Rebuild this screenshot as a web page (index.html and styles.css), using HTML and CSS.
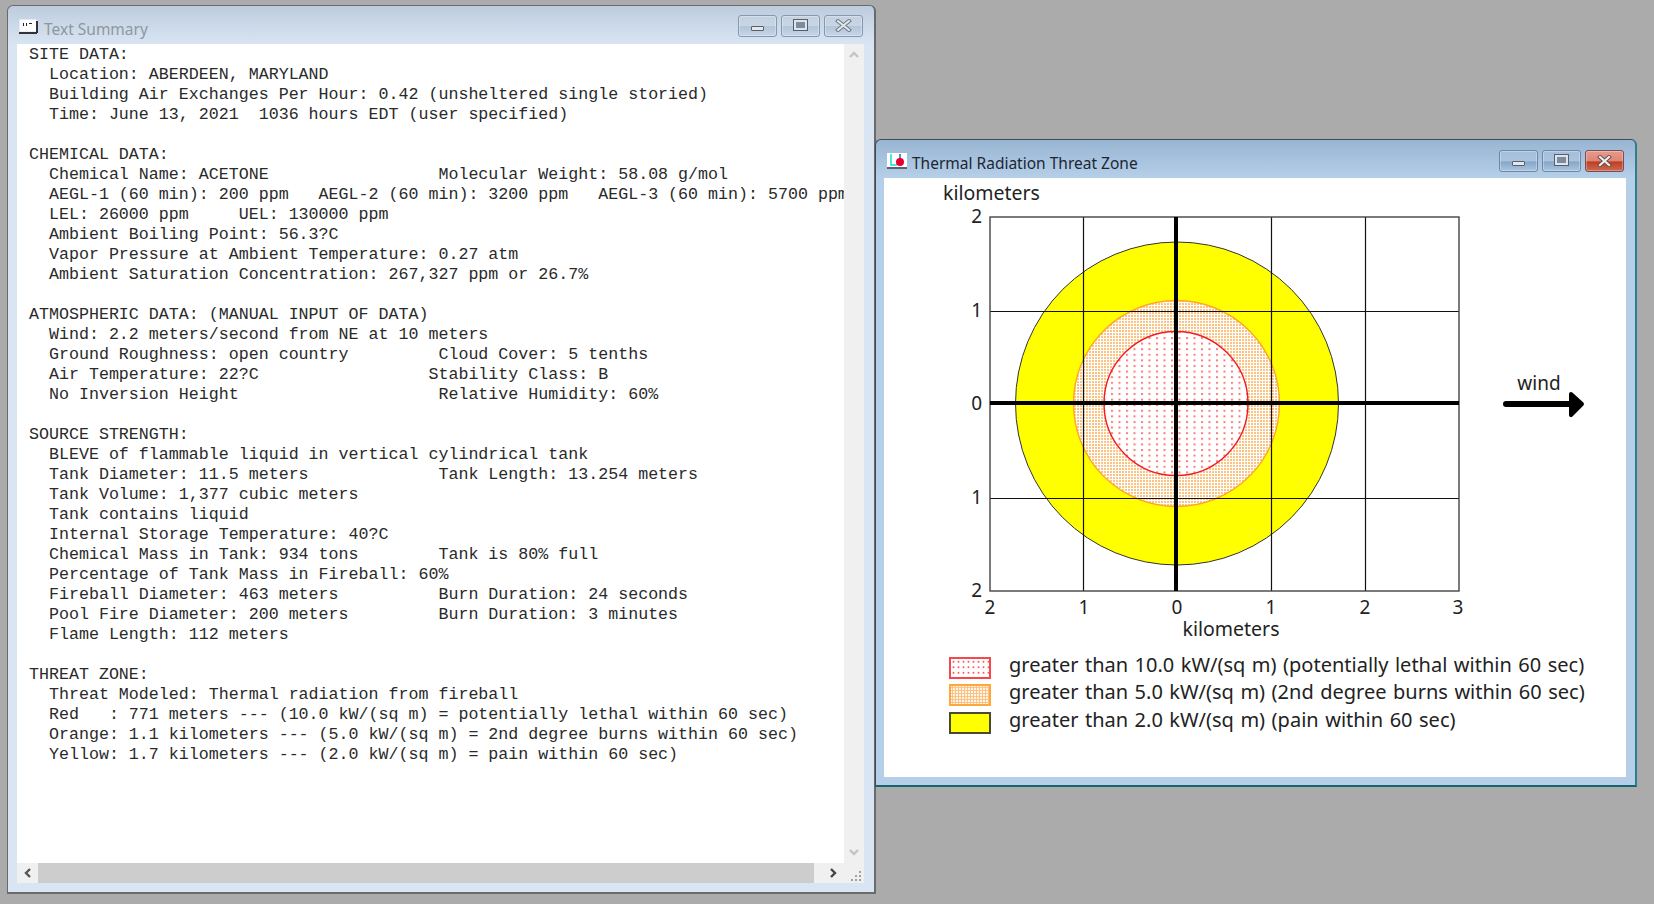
FILE: index.html
```html
<!DOCTYPE html>
<html lang="en">
<head>
    <meta charset="UTF-8">
    <title>Text Summary and Thermal Radiation Threat Zone</title>
    <link rel="stylesheet" href="styles.css">
</head>
<body>
    <div class="window summary-window">
        <div class="titlebar">
            <svg class="title-icon" width="20" height="16" viewBox="0 0 20 16">
                <rect x="0.5" y="0.5" width="17" height="12" fill="#fff"/>
                <path d="M0 14h18M18 2v12" stroke="#333" stroke-width="2" fill="none"/>
                <path d="M4 4h1v3H4zM7 4h1v3H7zM10 4h3v1h-3z" fill="#222"/>
            </svg>
            <span class="title-text">Text Summary</span>
            <div class="controls">
                <div class="ctl"><span class="ico-min"></span></div>
                <div class="ctl"><span class="ico-max"></span></div>
                <div class="ctl">
                    <svg width="17" height="13" viewBox="0 0 17 13">
                        <path d="M3 2l11 9M14 2L3 11" stroke="#6d7782" stroke-width="4" stroke-linecap="square"/>
                        <path d="M3 2l11 9M14 2L3 11" stroke="#dfe5ea" stroke-width="2" stroke-linecap="square"/>
                    </svg>
                </div>
            </div>
        </div>
        <div class="summary-body">
            <div class="text-row">
                <pre class="report">SITE DATA:
  Location: ABERDEEN, MARYLAND
  Building Air Exchanges Per Hour: 0.42 (unsheltered single storied)
  Time: June 13, 2021  1036 hours EDT (user specified)

CHEMICAL DATA:
  Chemical Name: ACETONE                 Molecular Weight: 58.08 g/mol
  AEGL-1 (60 min): 200 ppm   AEGL-2 (60 min): 3200 ppm   AEGL-3 (60 min): 5700 ppm
  LEL: 26000 ppm     UEL: 130000 ppm
  Ambient Boiling Point: 56.3?C
  Vapor Pressure at Ambient Temperature: 0.27 atm
  Ambient Saturation Concentration: 267,327 ppm or 26.7%

ATMOSPHERIC DATA: (MANUAL INPUT OF DATA)
  Wind: 2.2 meters/second from NE at 10 meters
  Ground Roughness: open country         Cloud Cover: 5 tenths
  Air Temperature: 22?C                 Stability Class: B
  No Inversion Height                    Relative Humidity: 60%

SOURCE STRENGTH:
  BLEVE of flammable liquid in vertical cylindrical tank
  Tank Diameter: 11.5 meters             Tank Length: 13.254 meters
  Tank Volume: 1,377 cubic meters
  Tank contains liquid
  Internal Storage Temperature: 40?C
  Chemical Mass in Tank: 934 tons        Tank is 80% full
  Percentage of Tank Mass in Fireball: 60%
  Fireball Diameter: 463 meters          Burn Duration: 24 seconds
  Pool Fire Diameter: 200 meters         Burn Duration: 3 minutes
  Flame Length: 112 meters

THREAT ZONE:
  Threat Modeled: Thermal radiation from fireball
  Red   : 771 meters --- (10.0 kW/(sq m) = potentially lethal within 60 sec)
  Orange: 1.1 kilometers --- (5.0 kW/(sq m) = 2nd degree burns within 60 sec)
  Yellow: 1.7 kilometers --- (2.0 kW/(sq m) = pain within 60 sec)</pre>
                <div class="vscroll">
                    <svg width="12" height="8" viewBox="0 0 12 8"><path d="M2 6l4-4 4 4" stroke="#c4c4c4" stroke-width="2.4" fill="none"/></svg>
                    <svg width="12" height="8" viewBox="0 0 12 8"><path d="M2 2l4 4 4-4" stroke="#c4c4c4" stroke-width="2.4" fill="none"/></svg>
                </div>
            </div>
            <div class="hscroll">
                <div class="arrow-btn">
                    <svg width="8" height="12" viewBox="0 0 8 12"><path d="M6 2L2 6l4 4" stroke="#555" stroke-width="2.4" fill="none"/></svg>
                </div>
                <div class="thumb"></div>
                <div class="arrow-btn right-btn">
                    <svg width="8" height="12" viewBox="0 0 8 12"><path d="M2 2l4 4-4 4" stroke="#444" stroke-width="2.4" fill="none"/></svg>
                </div>
                <div class="grip">
                    <svg width="11" height="11" viewBox="0 0 11 11" fill="#a0a0a0">
                        <rect x="8" y="0" width="2" height="2"/><rect x="8" y="4" width="2" height="2"/><rect x="8" y="8" width="2" height="2"/>
                        <rect x="4" y="4" width="2" height="2"/><rect x="4" y="8" width="2" height="2"/><rect x="0" y="8" width="2" height="2"/>
                    </svg>
                </div>
            </div>
        </div>
    </div>

    <div class="window threat-window">
        <div class="titlebar">
            <svg class="title-icon" width="20" height="16" viewBox="0 0 20 16">
                <rect width="20" height="14" fill="#fff"/>
                <path d="M4 1v11h6" stroke="#19d8f0" stroke-width="1.5" fill="none"/>
                <path d="M13 1v5" stroke="#2266dd" stroke-width="1.5"/>
                <circle cx="13" cy="9" r="4" fill="#e8002c"/>
                <path d="M0 15h20" stroke="#222" stroke-width="1.2"/>
            </svg>
            <span class="title-text">Thermal Radiation Threat Zone</span>
            <div class="controls">
                <div class="ctl"><span class="ico-min"></span></div>
                <div class="ctl"><span class="ico-max"></span></div>
                <div class="ctl ctl-close">
                    <svg width="15" height="12" viewBox="0 0 15 12">
                        <path d="M3 2l9 8M12 2L3 10" stroke="#6a4a4c" stroke-width="4" stroke-linecap="square"/>
                        <path d="M3 2l9 8M12 2L3 10" stroke="#eceff1" stroke-width="2.200" stroke-linecap="square"/>
                    </svg>
                </div>
            </div>
        </div>
        <div class="threat-body">
            <svg class="chart" width="743" height="464" viewBox="884 178 743 464">
                <defs>
                    <pattern id="redDots" width="7.500" height="5.600" patternUnits="userSpaceOnUse" x="1" y="1">
                        <rect x="0" y="0" width="2" height="2" fill="#fa7c7c"/>
                    </pattern>
                    <pattern id="orangeDots" width="3" height="3" patternUnits="userSpaceOnUse">
                        <rect width="3" height="3" fill="#fff"/>
                        <rect width="2" height="2" fill="#fdc382"/>
                    </pattern>
                </defs>

                <circle cx="1177" cy="403.500" r="161.500" fill="#ffff00" stroke="#333" stroke-width="1"/>
                <circle cx="1176.500" cy="403.500" r="103" fill="url(#orangeDots)" stroke="#ffa726" stroke-width="1.400"/>
                <circle cx="1176" cy="403.500" r="72" fill="#fff"/>
                <circle cx="1176" cy="403.500" r="72" fill="url(#redDots)" stroke="#f01c24" stroke-width="1.400"/>

                <path d="M1083.500 217v374M1271.500 217v374M1365.500 217v374M990 311.500h469M990 498.500h469" stroke="#111" stroke-width="1.200" fill="none"/>
                <rect x="990" y="217" width="469" height="374" fill="none" stroke="#444" stroke-width="1.400"/>
                <path d="M990 403h469" stroke="#000" stroke-width="4"/>
                <path d="M1176 217v374" stroke="#000" stroke-width="4"/>

                <text class="axis-text axis-title" x="943" y="200">kilometers</text>
                <text class="axis-text" x="982" y="223" text-anchor="end">2</text>
                <text class="axis-text" x="982" y="317" text-anchor="end">1</text>
                <text class="axis-text" x="982" y="410" text-anchor="end">0</text>
                <text class="axis-text" x="982" y="504" text-anchor="end">1</text>
                <text class="axis-text" x="982" y="597" text-anchor="end">2</text>
                <text class="axis-text" x="990" y="614" text-anchor="middle">2</text>
                <text class="axis-text" x="1084" y="614" text-anchor="middle">1</text>
                <text class="axis-text" x="1177" y="614" text-anchor="middle">0</text>
                <text class="axis-text" x="1271" y="614" text-anchor="middle">1</text>
                <text class="axis-text" x="1365" y="614" text-anchor="middle">2</text>
                <text class="axis-text" x="1458" y="614" text-anchor="middle">3</text>
                <text class="axis-text axis-title" x="1231" y="636" text-anchor="middle">kilometers</text>
                <text class="axis-text" x="1539" y="390" text-anchor="middle">wind</text>

                <path d="M1506 404h64" stroke="#000" stroke-width="6" stroke-linecap="round"/>
                <path d="M1571 394l11 10-11 11z" fill="#000" stroke="#000" stroke-width="4" stroke-linejoin="round"/>
            </svg>
            <div class="legend">
                <div class="legend-row"><span class="swatch swatch-red"></span>greater than 10.0 kW/(sq m) (potentially lethal within 60 sec)</div>
                <div class="legend-row"><span class="swatch swatch-orange"></span>greater than 5.0 kW/(sq m) (2nd degree burns within 60 sec)</div>
                <div class="legend-row"><span class="swatch swatch-yellow"></span>greater than 2.0 kW/(sq m) (pain within 60 sec)</div>
            </div>
        </div>
    </div>
</body>
</html>
```

FILE: styles.css
```css
html, body {
    margin: 0;
    height: 100%;
}
body {
    position: relative;
    background: #ababab;
    overflow: hidden;
    font-family: "Noto Sans", sans-serif;
}

/* desktop windows */
.window {
    position: absolute;
    box-sizing: border-box;
    display: flex;
    flex-direction: column;
    border-radius: 6px 6px 0 0;
}
.summary-window {
    left: 7px;
    top: 5px;
    width: 869px;
    height: 889px;
    border: 1px solid #6a6a6a;
    border-width: 1px 2px 2px 1px;
    background: linear-gradient(#bdccdd 0, #d9e5f3 39px) #d9e5f3;
    padding: 0 10px 9px 9px;
}
.threat-window {
    left: 875px;
    top: 139px;
    width: 762px;
    height: 648px;
    border: 1px solid #3d4a55;
    border-right: 2px solid #2b7f90;
    border-bottom: 2px solid #15656f;
    background: linear-gradient(#98b5d3 0, #b6cfe9 38px) #b6cfe9;
    padding: 0 9px 8px 8px;
}

.titlebar {
    display: flex;
    align-items: center;
    flex: none;
    height: 38px;
}
.title-icon {
    flex: none;
    margin: 4px 5px 0 2px;
}
.title-text {
    font-size: 15.500px;
    margin-top: 7px;
    color: #8f979f;
}
.threat-window .title-text {
    color: #1c2733;
}
.threat-window .title-icon {
    margin-left: 3px;
}

.controls {
    display: flex;
    gap: 4px;
    margin-left: auto;
    margin-right: 1px;
    margin-top: 1px;
}
.threat-window .controls {
    margin-right: 2px;
    margin-top: 3px;
}
.ctl {
    box-sizing: border-box;
    width: 39px;
    height: 22px;
    display: flex;
    align-items: center;
    justify-content: center;
    border: 1px solid #8898ac;
    border-radius: 3px;
    background: linear-gradient(#c2d0e0, #c7d6e6 50%, #b4c5d9 52%, #c5d5e6);
    box-shadow: inset 0 0 0 1px rgba(255,255,255,0.3);
}
.threat-window .ctl {
    background: linear-gradient(#a5bfda, #aac4df 50%, #87a6c6 54%, #a9c5e1);
    border-color: #6d88a6;
}
.threat-window .ctl-close {
    background: linear-gradient(#e79a8c, #dd8575 50%, #bd3d22 54%, #cc6a52);
    border-color: #7b4b4f;
}
.ico-min {
    display: block;
    width: 13px;
    height: 5px;
    margin-top: 5px;
    box-sizing: border-box;
    border: 1px solid #56606c;
    border-radius: 1px;
    background: #e4e8ec;
}
.ico-max {
    display: block;
    width: 13px;
    height: 10px;
    margin-top: -2px;
    box-sizing: border-box;
    border: 2px solid #dfe4e9;
    outline: 1px solid #56606c;
    background: #7d8ba0;
}

/* text summary */
.summary-body {
    flex: 1;
    min-height: 0;
    display: flex;
    flex-direction: column;
}
.text-row {
    flex: 1;
    min-height: 0;
    display: flex;
}
.report {
    flex: 1;
    min-width: 0;
    overflow: hidden;
    margin: 0;
    padding: 1px 0 0 12px;
    background: #fff;
    font-family: "Liberation Mono", monospace;
    font-size: 16.650px;
    line-height: 20px;
    color: #2a2a2a;
}
.vscroll {
    flex: none;
    width: 20px;
    box-sizing: border-box;
    padding: 7px 0 7px;
    background: #f0f0f0;
    display: flex;
    flex-direction: column;
    justify-content: space-between;
    align-items: center;
}
.hscroll {
    flex: none;
    height: 20px;
    display: flex;
    background: #f0f0f0;
}
.arrow-btn {
    flex: none;
    width: 21px;
    display: flex;
    align-items: center;
    justify-content: center;
}
.right-btn {
    width: 30px;
    box-sizing: border-box;
    padding-left: 8px;
}
.thumb {
    flex: 1;
    background: #cdcdcd;
}
.grip {
    flex: none;
    width: 20px;
    box-sizing: border-box;
    display: flex;
    align-items: flex-end;
    justify-content: flex-end;
    padding: 0 2px 1px 0;
}

/* threat zone plot */
.threat-body {
    flex: 1;
    min-height: 0;
    background: #fff;
}
.chart {
    display: block;
}
.axis-text {
    font-family: "Noto Sans", sans-serif;
    font-size: 19px;
    fill: #222;
}
.axis-title {
    font-size: 19.500px;
}
.legend {
    display: flex;
    flex-direction: column;
    gap: 5.400px;
    padding: 15px 0 0 65px;
    font-size: 20px;
    word-spacing: 1.300px;
    color: #222;
}
.legend-row {
    display: flex;
    align-items: flex-start;
    gap: 18px;
    height: 22px;
    line-height: 15px;
    white-space: nowrap;
}
.swatch {
    flex: none;
    box-sizing: border-box;
    width: 42px;
    height: 22px;
    border: 2px solid;
}
.swatch-red {
    border-color: #f5484c;
    background: radial-gradient(circle, #f65a5a 0.9px, transparent 1.2px) 0 0 / 5px 5.500px #fff;
}
.swatch-orange {
    border-color: #fba93f;
    background: radial-gradient(circle, #fdc382 1px, #fff 1.5px) 0 0 / 3px 3px;
}
.swatch-yellow {
    border-color: #4a4a30;
    background: #ffff00;
}
```
